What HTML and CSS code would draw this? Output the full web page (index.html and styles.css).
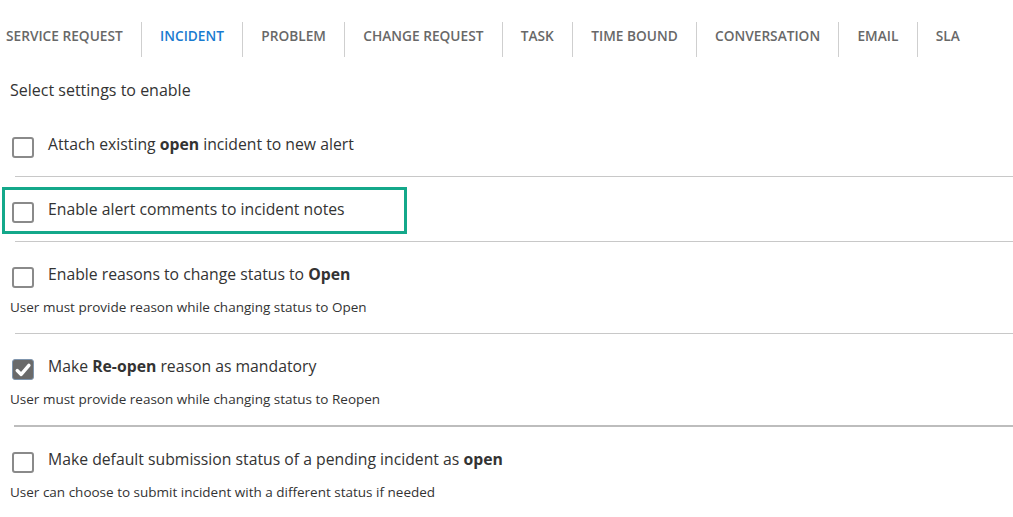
FILE: index.html
```html
<!DOCTYPE html>
<html>
<head>
<meta charset="utf-8">
<link rel="stylesheet" href="styles.css">
</head>
<body>
<nav class="tabs">
  <a class="tab first">SERVICE REQUEST</a>
  <a class="tab active">INCIDENT</a>
  <a class="tab">PROBLEM</a>
  <a class="tab">CHANGE REQUEST</a>
  <a class="tab">TASK</a>
  <a class="tab">TIME BOUND</a>
  <a class="tab">CONVERSATION</a>
  <a class="tab">EMAIL</a>
  <a class="tab">SLA</a>
</nav>
<main class="content">
  <h2 class="heading">Select settings to enable</h2>

  <div class="setting first-setting">
    <div class="row">
      <span class="checkbox"></span>
      <span class="label">Attach existing <b>open</b> incident to new alert</span>
    </div>
  </div>
  <div class="divider"></div>

  <div class="setting">
    <div class="highlight"></div>
    <div class="row">
      <span class="checkbox"></span>
      <span class="label">Enable alert comments to incident notes</span>
    </div>
  </div>
  <div class="divider"></div>

  <div class="setting with-sub">
    <div class="row">
      <span class="checkbox"></span>
      <span class="label">Enable reasons to change status to <b>Open</b></span>
    </div>
    <p class="sub">User must provide reason while changing status to Open</p>
  </div>
  <div class="divider"></div>

  <div class="setting with-sub">
    <div class="row">
      <span class="checkbox checked">
        <svg viewBox="0 0 22 22" width="22" height="22"><path d="M5.2 11.6 L9.2 15.4 L16.9 6.4" fill="none" stroke="#fff" stroke-width="3.4" stroke-linecap="round" stroke-linejoin="round"/></svg>
      </span>
      <span class="label">Make <b>Re-open</b> reason as mandatory</span>
    </div>
    <p class="sub">User must provide reason while changing status to Reopen</p>
  </div>
  <div class="divider thick"></div>

  <div class="setting with-sub">
    <div class="row">
      <span class="checkbox"></span>
      <span class="label">Make default submission status of a pending incident as <b>open</b></span>
    </div>
    <p class="sub">User can choose to submit incident with a different status if needed</p>
  </div>
</main>
</body>
</html>
```

FILE: styles.css
```css
* { box-sizing: border-box; }
html, body {
  margin: 0;
  padding: 0;
  background: #fff;
  font-family: "Open Sans", "Noto Sans", sans-serif;
  color: #333;
}
.tabs {
  display: flex;
  padding-top: 22px;
}
.tab {
  display: block;
  height: 35px;
  padding: 4px 18.2px 11px 18.2px;
  line-height: 20px;
  font-size: 13.7px;
  font-weight: 600;
  color: #686868;
  border-left: 1px solid #cfcfcf;
  white-space: nowrap;
}
.tab.first {
  border-left: none;
  padding-left: 6px;
}
.tab.active { color: #1a7bd0; }

.content { padding-left: 10px; }

.heading {
  margin: 0;
  padding-top: 22px;
  font-size: 16px;
  font-weight: 400;
  line-height: 22px;
  color: #333;
}

.setting {
  position: relative;
  padding: 25px 0 18px 0;
}
.setting.first-setting { padding-top: 36px; }
.setting.with-sub { padding-bottom: 17px; }

.row {
  display: flex;
  align-items: flex-start;
  height: 21px;
}
.checkbox {
  flex: none;
  width: 22px;
  height: 21px;
  margin-left: 2px;
  margin-right: 14px;
  border: 2px solid #8a8a8a;
  border-radius: 3px;
  background: #fff;
}
.checkbox.checked {
  background: #6a6a6a;
  border: 1px solid #7f95ad;
}
.checkbox.checked svg {
  display: block;
  margin: -1px;
}
.label {
  font-size: 15.75px;
  line-height: 22px;
  margin-top: -4px;
  color: #333;
}
.label b { font-weight: 700; }

.sub {
  margin: 10px 0 0 0;
  font-size: 13.5px;
  line-height: 18px;
  color: #333;
}

.divider {
  height: 1px;
  background: #c8c8c8;
  margin-left: 5px;
}
.divider.thick {
  height: 2px;
  background: #bdbdbd;
  margin-left: 4px;
}

.highlight {
  position: absolute;
  left: -8px;
  top: 10px;
  width: 405px;
  height: 47px;
  border: 3px solid #14a88a;
}
```
